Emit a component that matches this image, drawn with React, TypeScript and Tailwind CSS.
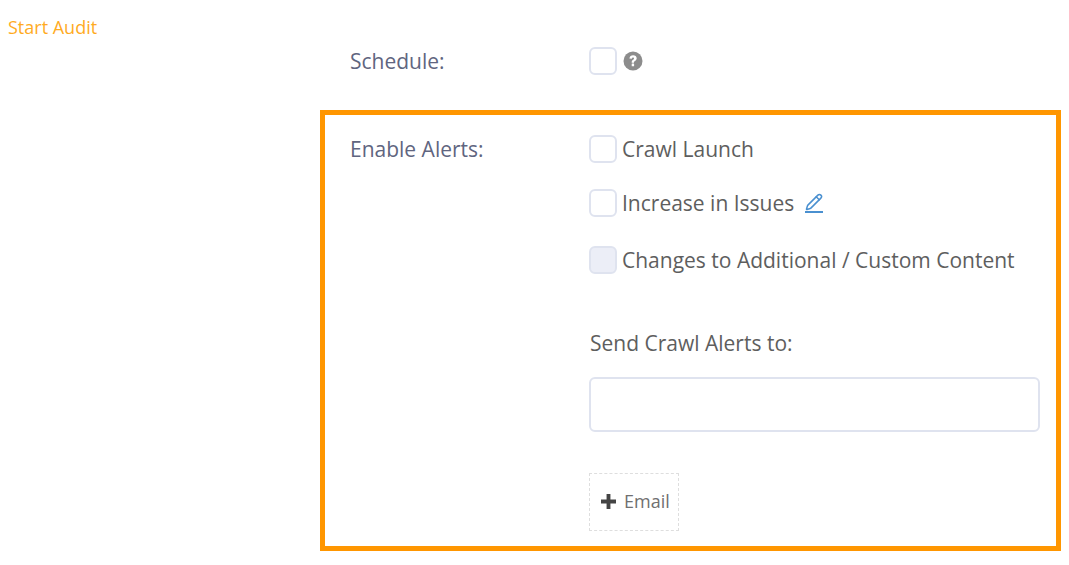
import { Pencil } from "lucide-react";

function Checkbox({ disabled }: { disabled?: boolean }) {
  return (
    <span
      className={`block w-[28px] h-[28px] shrink-0 rounded-[6px] border-2 border-[#dfe3ef] ${
        disabled ? "bg-[#eceef7]" : "bg-white"
      }`}
    />
  );
}

export default function App() {
  return (
    <div className="w-[1069px] h-[565px] overflow-hidden bg-white font-['Open_Sans',sans-serif] text-[#5e5e5e]">
      <div className="pl-2 pt-[15px] h-[47px] text-[18px] leading-[24px] text-[#ffab1f]">
        Start Audit
      </div>

      {/* schedule row */}
      <div className="flex items-center ml-[350px] h-[28px]">
        <div className="w-[239px] text-[21px] leading-[28px] text-[#5f6580]">Schedule:</div>
        <Checkbox />
        <svg viewBox="0 0 20 20" className="w-[20px] h-[20px] ml-[6px]">
          <circle cx="10" cy="10" r="9.5" fill="#8c8c8c" />
          <path
            d="M6.4 7.6c.2-2.1 1.6-3.3 3.7-3.3 2.1 0 3.6 1.2 3.6 3 0 1.3-.7 2-1.7 2.7-.8.5-1 .8-1 1.4v.4H8.7v-.7c0-1.1.5-1.8 1.4-2.4.6-.4.9-.7.9-1.2 0-.5-.4-.9-1-.9-.7 0-1.1.4-1.2 1.1z"
            fill="#fff"
          />
          <rect x="8.7" y="12.6" width="2.4" height="2.6" rx=".3" fill="#fff" />
        </svg>
      </div>

      {/* highlighted alerts */}
      <div className="mt-[35px] ml-[320px] w-[741px] h-[441px] border-[5px] border-[#ff9600] flex pl-[25px] pt-[20px]">
        <div className="w-[239px] text-[21px] leading-[28px] text-[#5f6580]">
          Enable Alerts:
        </div>
        <div className="flex flex-col">
          <div className="flex items-center gap-[5px] h-[28px] text-[21px] leading-[28px]">
            <Checkbox />
            <span>Crawl Launch</span>
          </div>
          <div className="flex items-center gap-[5px] h-[28px] mt-[26px] text-[21px] leading-[28px]">
            <Checkbox />
            <span>Increase in Issues</span>
            <span className="ml-[6px] flex flex-col items-center text-[#4a90d0]">
              <Pencil size={18} strokeWidth={2} />
              <span className="block w-[18px] h-[2px] bg-[#4a90d0]" />
            </span>
          </div>
          <div className="flex items-center gap-[5px] h-[28px] mt-[29px] text-[21px] leading-[28px]">
            <Checkbox disabled />
            <span>Changes to Additional / Custom Content</span>
          </div>
          <div className="mt-[55px] ml-[1px] text-[21px] leading-[28px]">
            Send Crawl Alerts to:
          </div>
          <input className="mt-[20px] w-[451px] h-[55px] rounded-[6px] border-2 border-[#dfe3ef] bg-white outline-none" />
          <button className="mt-[41px] flex items-center justify-center pl-[3px] pb-[2px] w-[90px] h-[58px] border border-dashed border-[#dedede] text-[18px] text-[#707070]">
            <svg viewBox="0 0 14 14" className="w-[15px] h-[15px] mr-[8px]">
              <path d="M5.2 0h3.6v5.2H14v3.6H8.8V14H5.2V8.8H0V5.2h5.2z" fill="#444" />
            </svg>
            Email
          </button>
        </div>
      </div>
    </div>
  );
}
